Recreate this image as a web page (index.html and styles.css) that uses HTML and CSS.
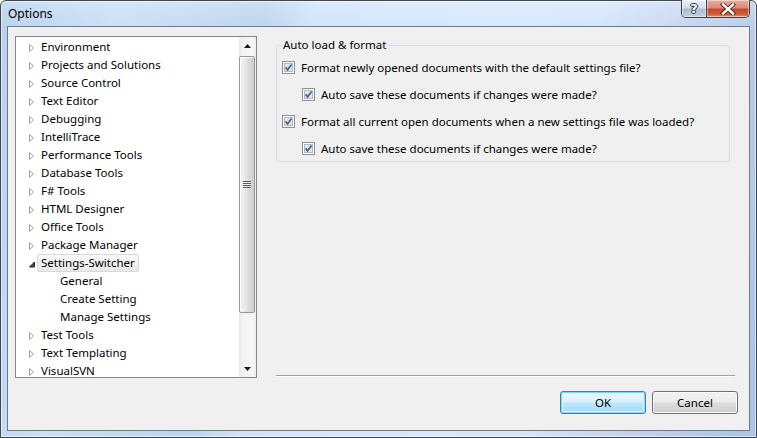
FILE: index.html
```html
<!DOCTYPE html>
<html>
<head>
<meta charset="utf-8">
<link rel="stylesheet" href="styles.css">
</head>
<body>
<div class="window">
  <div class="titlebar">
    <span class="title">Options</span>
    <div class="caption">
      <div class="cbtn help">?</div>
      <div class="cbtn close">
        <svg width="16" height="12" viewBox="0 0 16 12"><path d="M3 1.5 L13 10.5 M13 1.5 L3 10.5" stroke="#3a2a26" stroke-width="4.2" stroke-linecap="square"/><path d="M3 1.5 L13 10.5 M13 1.5 L3 10.5" stroke="#ffffff" stroke-width="2.4" stroke-linecap="square"/></svg>
      </div>
    </div>
  </div>
  <div class="client">
    <div class="main">
      <div class="tree">
        <ul class="items">
          <li class="row"><svg class="exp" width="9" height="18"><path d="M1.5 6.5 L5.5 10 L1.5 13.5 Z" fill="#fff" stroke="#a3a3a3"/></svg><span class="label">Environment</span></li>
          <li class="row"><svg class="exp" width="9" height="18"><path d="M1.5 6.5 L5.5 10 L1.5 13.5 Z" fill="#fff" stroke="#a3a3a3"/></svg><span class="label">Projects and Solutions</span></li>
          <li class="row"><svg class="exp" width="9" height="18"><path d="M1.5 6.5 L5.5 10 L1.5 13.5 Z" fill="#fff" stroke="#a3a3a3"/></svg><span class="label">Source Control</span></li>
          <li class="row"><svg class="exp" width="9" height="18"><path d="M1.5 6.5 L5.5 10 L1.5 13.5 Z" fill="#fff" stroke="#a3a3a3"/></svg><span class="label">Text Editor</span></li>
          <li class="row"><svg class="exp" width="9" height="18"><path d="M1.5 6.5 L5.5 10 L1.5 13.5 Z" fill="#fff" stroke="#a3a3a3"/></svg><span class="label">Debugging</span></li>
          <li class="row"><svg class="exp" width="9" height="18"><path d="M1.5 6.5 L5.5 10 L1.5 13.5 Z" fill="#fff" stroke="#a3a3a3"/></svg><span class="label">IntelliTrace</span></li>
          <li class="row"><svg class="exp" width="9" height="18"><path d="M1.5 6.5 L5.5 10 L1.5 13.5 Z" fill="#fff" stroke="#a3a3a3"/></svg><span class="label">Performance Tools</span></li>
          <li class="row"><svg class="exp" width="9" height="18"><path d="M1.5 6.5 L5.5 10 L1.5 13.5 Z" fill="#fff" stroke="#a3a3a3"/></svg><span class="label">Database Tools</span></li>
          <li class="row"><svg class="exp" width="9" height="18"><path d="M1.5 6.5 L5.5 10 L1.5 13.5 Z" fill="#fff" stroke="#a3a3a3"/></svg><span class="label">F# Tools</span></li>
          <li class="row"><svg class="exp" width="9" height="18"><path d="M1.5 6.5 L5.5 10 L1.5 13.5 Z" fill="#fff" stroke="#a3a3a3"/></svg><span class="label">HTML Designer</span></li>
          <li class="row"><svg class="exp" width="9" height="18"><path d="M1.5 6.5 L5.5 10 L1.5 13.5 Z" fill="#fff" stroke="#a3a3a3"/></svg><span class="label">Office Tools</span></li>
          <li class="row"><svg class="exp" width="9" height="18"><path d="M1.5 6.5 L5.5 10 L1.5 13.5 Z" fill="#fff" stroke="#a3a3a3"/></svg><span class="label">Package Manager</span></li>
          <li class="row"><svg class="exp" width="9" height="18"><path d="M6.5 8 L6.5 13 L1.5 13 Z" fill="#4a4a4a" stroke="#262626" stroke-linejoin="round"/></svg><span class="label selected">Settings-Switcher</span></li>
          <li class="row child"><span class="label">General</span></li>
          <li class="row child"><span class="label">Create Setting</span></li>
          <li class="row child"><span class="label">Manage Settings</span></li>
          <li class="row"><svg class="exp" width="9" height="18"><path d="M1.5 6.5 L5.5 10 L1.5 13.5 Z" fill="#fff" stroke="#a3a3a3"/></svg><span class="label">Test Tools</span></li>
          <li class="row"><svg class="exp" width="9" height="18"><path d="M1.5 6.5 L5.5 10 L1.5 13.5 Z" fill="#fff" stroke="#a3a3a3"/></svg><span class="label">Text Templating</span></li>
          <li class="row"><svg class="exp" width="9" height="18"><path d="M1.5 6.5 L5.5 10 L1.5 13.5 Z" fill="#fff" stroke="#a3a3a3"/></svg><span class="label">VisualSVN</span></li>
        </ul>
        <div class="vscroll">
          <div class="sbtn"><svg width="7" height="4" viewBox="0 0 7 4"><path d="M3.5 0 L7 4 L0 4 Z" fill="#1a1a1a"/></svg></div>
          <div class="track">
            <div class="thumb"><div class="grip"><i></i><i></i><i></i><i></i></div></div>
          </div>
          <div class="sbtn"><svg width="7" height="4" viewBox="0 0 7 4"><path d="M0 0 L7 0 L3.5 4 Z" fill="#1a1a1a"/></svg></div>
        </div>
      </div>
      <div class="page">
        <fieldset class="group">
          <legend>Auto load &amp; format</legend>
          <div class="opt">
            <svg class="cb" width="13" height="13" viewBox="0 0 13 13"><rect x="0.5" y="0.5" width="12" height="12" fill="#fcfcfc" stroke="#8e8f8f"/><rect x="2.5" y="2.5" width="8" height="8" fill="#e3e6ea" stroke="#b3b8bf"/><path d="M3.6 6.4 L5.6 8.8 L9.6 3.6" fill="none" stroke="#44609a" stroke-width="1.7"/></svg>
            <span>Format newly opened documents with the default settings file?</span>
          </div>
          <div class="opt sub">
            <svg class="cb" width="13" height="13" viewBox="0 0 13 13"><rect x="0.5" y="0.5" width="12" height="12" fill="#fcfcfc" stroke="#8e8f8f"/><rect x="2.5" y="2.5" width="8" height="8" fill="#e3e6ea" stroke="#b3b8bf"/><path d="M3.6 6.4 L5.6 8.8 L9.6 3.6" fill="none" stroke="#44609a" stroke-width="1.7"/></svg>
            <span>Auto save these documents if changes were made?</span>
          </div>
          <div class="opt">
            <svg class="cb" width="13" height="13" viewBox="0 0 13 13"><rect x="0.5" y="0.5" width="12" height="12" fill="#fcfcfc" stroke="#8e8f8f"/><rect x="2.5" y="2.5" width="8" height="8" fill="#e3e6ea" stroke="#b3b8bf"/><path d="M3.6 6.4 L5.6 8.8 L9.6 3.6" fill="none" stroke="#44609a" stroke-width="1.7"/></svg>
            <span>Format all current open documents when a new settings file was loaded?</span>
          </div>
          <div class="opt sub last">
            <svg class="cb" width="13" height="13" viewBox="0 0 13 13"><rect x="0.5" y="0.5" width="12" height="12" fill="#fcfcfc" stroke="#8e8f8f"/><rect x="2.5" y="2.5" width="8" height="8" fill="#e3e6ea" stroke="#b3b8bf"/><path d="M3.6 6.4 L5.6 8.8 L9.6 3.6" fill="none" stroke="#44609a" stroke-width="1.7"/></svg>
            <span>Auto save these documents if changes were made?</span>
          </div>
        </fieldset>
        <div class="sep"></div>
      </div>
    </div>
    <div class="buttons">
      <button class="btn default">OK</button>
      <button class="btn">Cancel</button>
    </div>
  </div>
</div>
</body>
</html>
```
FILE: styles.css
```css
* { box-sizing: border-box; }
html, body { margin: 0; padding: 0; }
body {
  width: 757px;
  height: 438px;
  overflow: hidden;
  font-family: "Noto Sans", "Open Sans", sans-serif;
  font-size: 11.5px;
  color: #000;
  background: #ffffff;
}
.window {
  width: 757px;
  height: 438px;
  border: 1px solid #3c4654;
  border-radius: 6px 6px 0 0;
  display: flex;
  flex-direction: column;
  background:
    linear-gradient(to bottom, rgba(255,255,255,0.25), rgba(255,255,255,0) 30px),
    linear-gradient(100deg, #b8d2ee 0%, #c8dff6 14%, #bcd4ee 32%, #cfe4fb 38%, #d5e8fd 60%, #d3e6fc 72%, #c6d3ef 84%, #b7cbe9 92%, #a9c4e6 100%);
  box-shadow: inset 0 0 0 1px rgba(255,255,255,0.55);
}
.titlebar {
  height: 25px;
  display: flex;
  align-items: flex-start;
  flex: none;
}
.title {
  padding-left: 7px;
  line-height: 25px;
  font-size: 12px;
  color: #000;
}
.caption {
  margin-left: auto;
  margin-right: 6px;
  margin-top: -1px;
  height: 18px;
  display: flex;
  border: 1px solid #3a4150;
  border-top: none;
  border-radius: 0 0 5px 5px;
  overflow: hidden;
}
.cbtn {
  height: 17px;
  display: flex;
  align-items: center;
  justify-content: center;
  box-shadow: inset 0 0 0 1px rgba(255,255,255,0.45);
}
.help {
  width: 25px;
  border-right: 1px solid #3a4150;
  background: linear-gradient(to bottom, #e9eff7 0%, #d5dfeb 45%, #aebcd0 55%, #c3d0e1 100%);
  color: #fff;
  font-family: "DejaVu Sans", sans-serif;
  font-weight: bold;
  font-size: 13px;
  text-shadow: 0 0 1px #2a2f3a, 1px 0 0 #2a2f3a, -1px 0 0 #2a2f3a, 0 1px 0 #2a2f3a, 0 -1px 0 #2a2f3a;
}
.close {
  width: 42px;
  background: linear-gradient(to bottom, #e9ad9f 0%, #dc8c77 45%, #c7462a 55%, #d0603f 85%, #e39a6f 100%);
}
.client {
  flex: 1;
  margin: 0 6px 6px 6px;
  border: 1px solid #6c7b8b;
  background: #f0f0f0;
  padding: 9px 11px 0 7px;
  display: flex;
  flex-direction: column;
}
.main {
  display: flex;
  gap: 19px;
  height: 342px;
  flex: none;
}
.tree {
  width: 242px;
  height: 342px;
  border: 1px solid #828790;
  background: #fff;
  display: flex;
  overflow: hidden;
}
.items {
  list-style: none;
  margin: 0;
  padding: 1px 0 0 0;
  flex: 1;
  overflow: hidden;
}
.row {
  height: 18px;
  display: flex;
  align-items: center;
  padding-left: 12px;
  white-space: nowrap;
}
.row.child { padding-left: 40px; }
.exp { flex: none; display: block; }
.label {
  height: 18px;
  line-height: 16px;
  padding: 0 3px;
  border: 1px solid transparent;
  border-radius: 2px;
}
.label.selected {
  border-color: #d9d9d9;
  background: linear-gradient(to bottom, #fafafa, #e8e8e8);
}
.vscroll {
  width: 17px;
  flex: none;
  display: flex;
  flex-direction: column;
  background: linear-gradient(to right, #e6e6e6 0%, #f1f1f1 15%, #f6f6f6 80%, #ededed 100%);
}
.sbtn {
  height: 17px;
  flex: none;
  display: flex;
  align-items: center;
  justify-content: center;
}
.track {
  flex: 1;
  padding: 2px 1px 0 0;
}
.thumb {
  height: 257px;
  border: 1px solid #979797;
  border-radius: 2px;
  background: linear-gradient(to right, #f4f4f4 0%, #eaeaea 35%, #dcdcdc 60%, #cdcdcd 100%);
  box-shadow: inset 1px 1px 0 #fdfdfd;
  display: flex;
  align-items: center;
  justify-content: center;
}
.grip {
  width: 8px;
  display: flex;
  flex-direction: column;
}
.grip i {
  display: block;
  height: 2px;
  border-top: 1px solid #5a5a5a;
  border-bottom: 1px solid #f4f4f4;
}
.page {
  width: 459px;
  display: flex;
  flex-direction: column;
}
.group {
  width: 454px;
  margin: 0;
  padding: 0 0 0 5px;
  border: 1px solid #d5dfe5;
  border-radius: 3px;
  min-width: 0;
}
.group legend {
  padding: 0 1px;
  line-height: 18px;
  height: 18px;
}
.opt {
  height: 27px;
  display: flex;
  align-items: center;
  gap: 6px;
  white-space: nowrap;
}
.opt:first-of-type { margin-top: 0; }
.opt.sub { padding-left: 20px; }
.opt.last { height: 26px; }
.cb { flex: none; display: block; }
.sep {
  margin-top: auto;
  margin-bottom: 1px;
  height: 2px;
  border-top: 1px solid #a0a0a0;
  border-bottom: 1px solid #ffffff;
}
.buttons {
  display: flex;
  justify-content: flex-end;
  gap: 6px;
  margin-top: 13px;
}
.btn {
  width: 86px;
  height: 23px;
  font-family: inherit;
  font-size: 11.5px;
  color: #000;
  border: 1px solid #707070;
  border-radius: 3px;
  padding: 0;
  background: linear-gradient(to bottom, #f2f2f2 0%, #ebebeb 49%, #dddddd 51%, #cfcfcf 100%);
  box-shadow: inset 0 0 0 1px #fbfbfb;
}
.btn.default {
  border-color: #3c7fb1;
  background: linear-gradient(to bottom, #eaf6fd 0%, #d9f0fc 49%, #bee6fd 51%, #a7d9f5 100%);
  box-shadow: inset 0 0 0 1px #7fd5f7, inset 0 0 0 2px #dff3fc;
}
```
